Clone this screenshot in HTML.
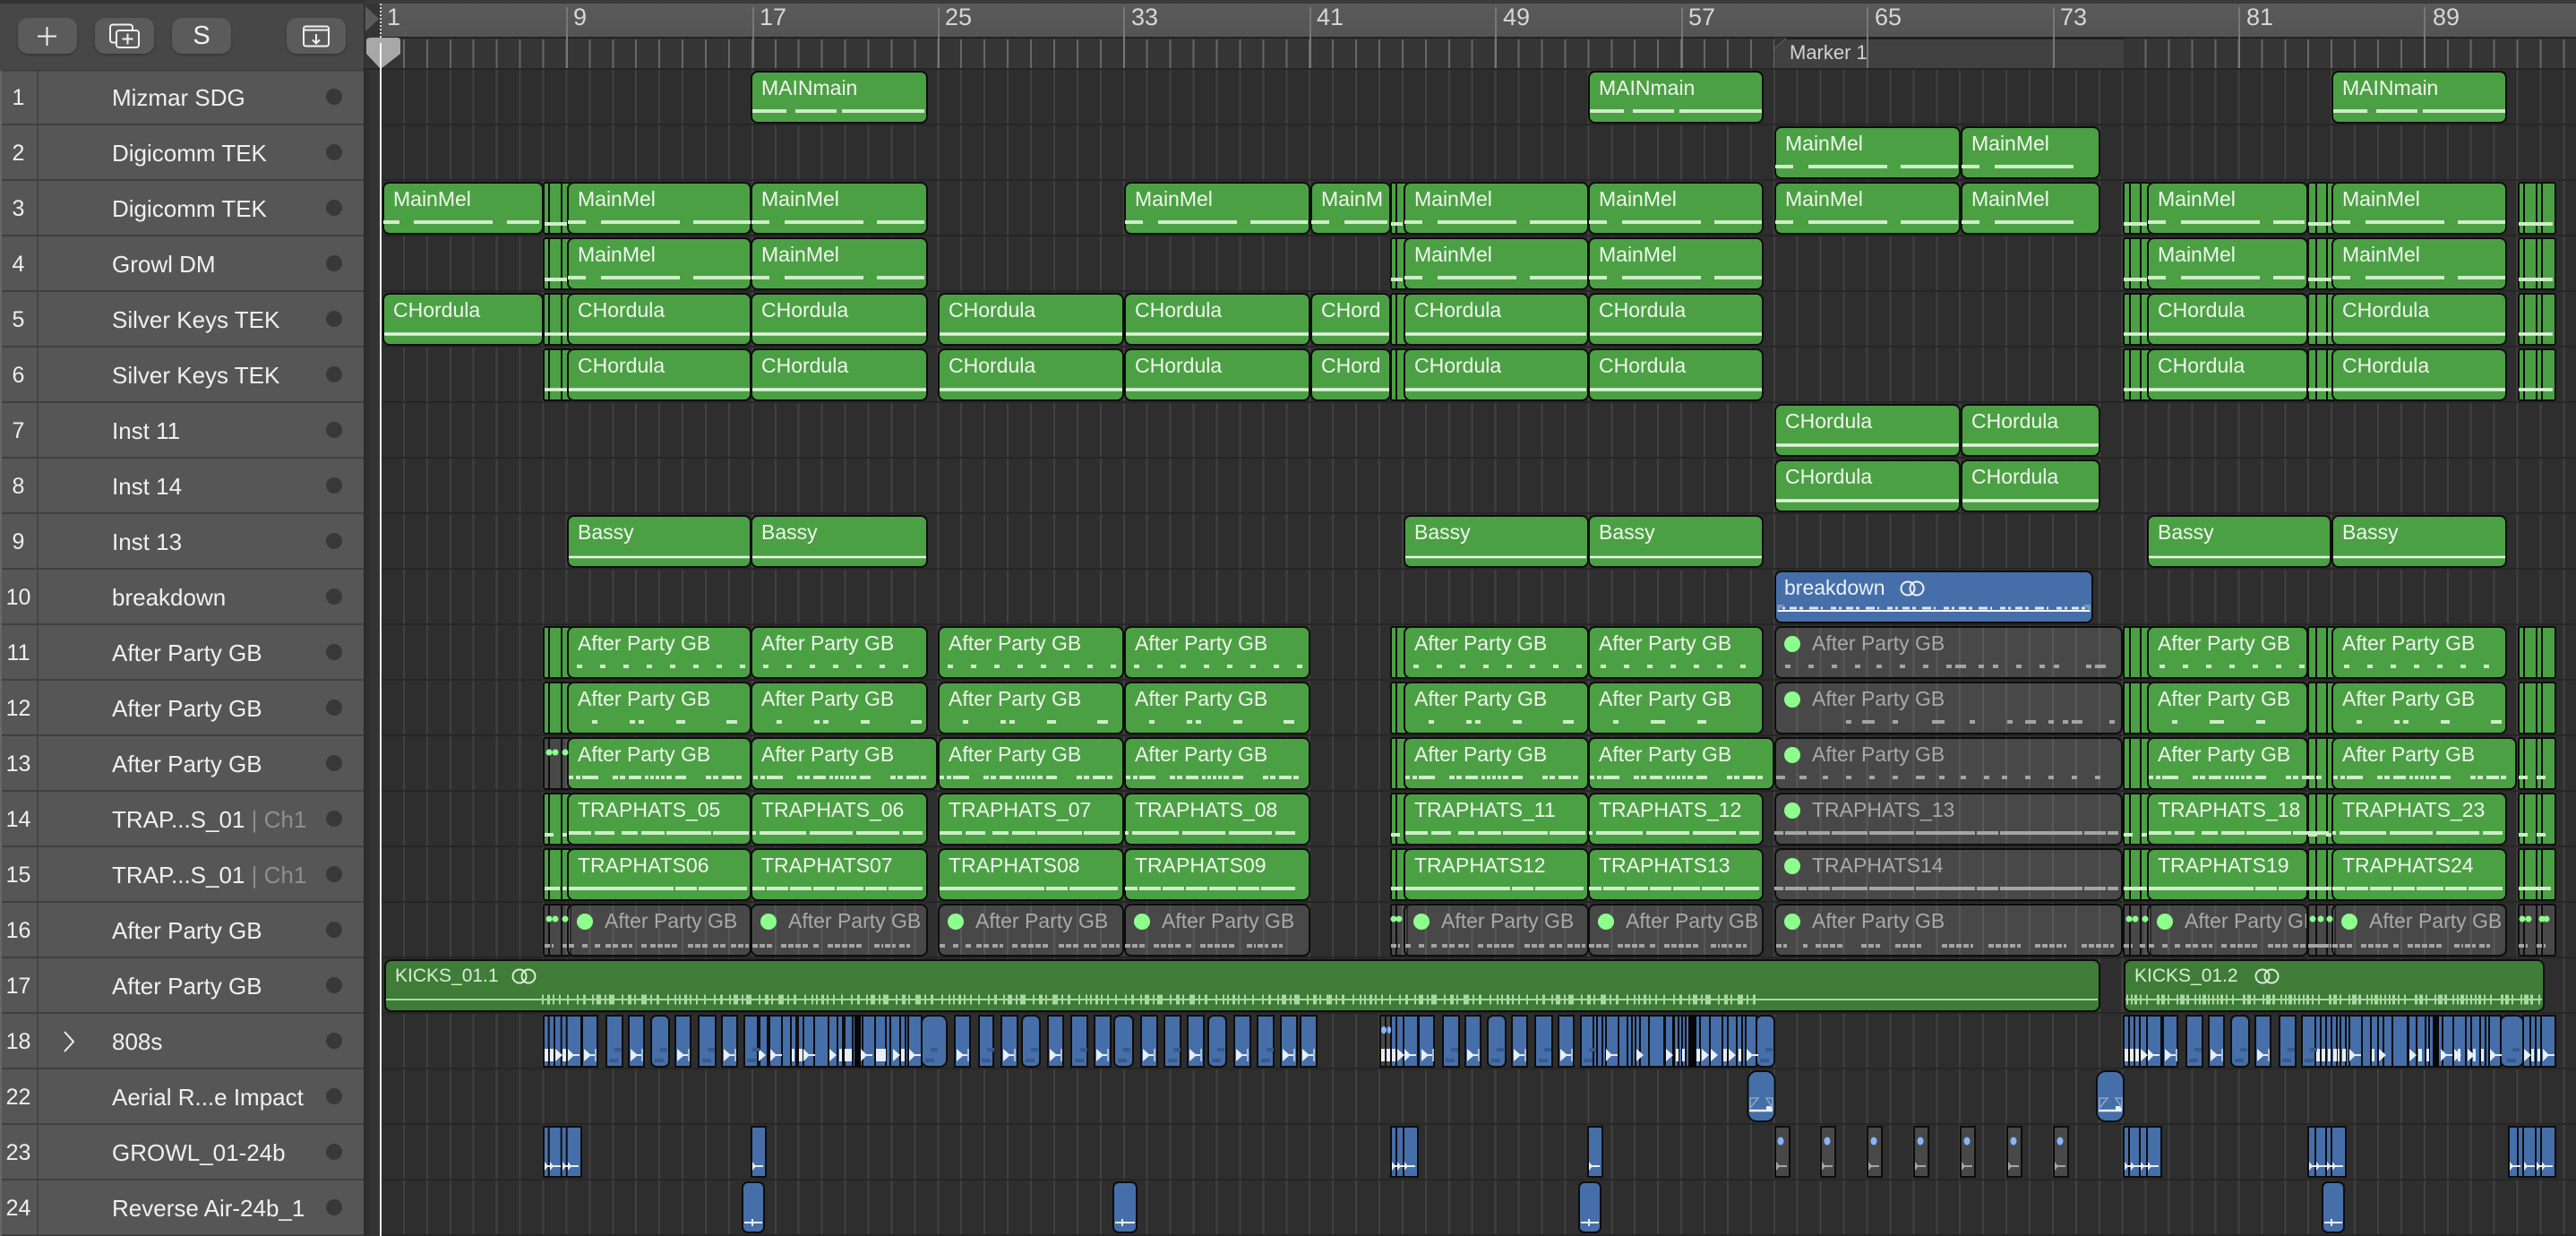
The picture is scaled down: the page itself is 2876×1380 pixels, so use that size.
<!DOCTYPE html>
<html><head><meta charset="utf-8"><title>Arrange</title>
<style>
html,body{margin:0;padding:0;background:#2e2e2e}
#p{position:relative;width:2876px;height:1380px;overflow:hidden;background:#2e2e2e;font-family:"Liberation Sans",sans-serif}
#g{position:absolute;left:424px;top:78px;right:0;bottom:0;background-color:#2e2e2e;background-image:repeating-linear-gradient(180deg,transparent 0 60px,#262626 60px 62px),repeating-linear-gradient(90deg,#414141 0 2px,transparent 2px 25.93px)}
#gl{position:absolute;left:406px;top:78px;width:18px;bottom:0;background:linear-gradient(90deg,#2b2b2b,#353535 60%,#333)}
.w{position:absolute;left:0;width:2876px;height:59px}
b{position:absolute;top:0;height:59px;box-sizing:border-box;border:2px solid #0d0d0d;border-radius:8px;background-color:#4ca044;color:#eef7ec;font:400 23px/26px "Liberation Sans",sans-serif;padding:4px 0 0 10px;white-space:nowrap;overflow:hidden}
.e{background-color:rgba(255,255,255,.125);color:#a9a9a9;padding-left:40px}
.e:before{content:"";position:absolute;left:9px;top:9px;width:18px;height:18px;border-radius:50%;background:#8cff8c}
.s{border-radius:3px;padding:0}
.x{background-color:rgba(255,255,255,.125)}
.A{left:606px;width:32px;background-image:linear-gradient(90deg,transparent 4px,#0d0d0d 4px 6px,transparent 6px 18px,#0d0d0d 18px 20px,transparent 20px)}
.B{left:1552px;width:20px;background-image:linear-gradient(90deg,transparent 4px,#0d0d0d 4px 6px,transparent 6px)}
.C{left:2370px;width:32px;background-image:linear-gradient(90deg,transparent 5px,#0d0d0d 5px 7px,transparent 7px 17px,#0d0d0d 17px 19px,transparent 19px)}
.D{left:2576px;width:32px;background-image:linear-gradient(90deg,transparent 7px,#0d0d0d 7px 9px,transparent 9px 19px,#0d0d0d 19px 21px,transparent 21px)}
.E{left:2811px;width:43px;background-image:linear-gradient(90deg,transparent 4px,#0d0d0d 4px 6px,transparent 6px 18px,#0d0d0d 18px 20px,transparent 20px 24px,#0d0d0d 24px 26px,transparent 26px)}
.k1{left:427px;width:180px}.k9{left:633px;width:206px}.k17{left:838px;width:198px}.k17l{left:838px;width:209px}
.k25{left:1047px;width:208px}.k33{left:1255px;width:208px}.k41{left:1463px;width:90px}.k45{left:1567px;width:207px}
.k53{left:1773px;width:196px}.k53l{left:1773px;width:208px}.k61{left:1981px;width:208px}.k69{left:2189px;width:156px}
.kg{left:1981px;width:389px}.k77{left:2397px;width:180px}.k77l{left:2397px;width:206px}.k85{left:2603px;width:196px}.k85l{left:2603px;width:207px}
.dk{background-color:#3e7c38;color:#d8eed3;font-size:21px}
.bl{background-color:#466fa9;color:#eaf0fa}
#o,#h2{position:absolute;left:0;top:0}
#sb{position:absolute;left:0;top:0;width:406px;height:1380px;background:#565656}
.t{position:absolute;left:0;width:406px;height:62px;box-sizing:border-box;border-bottom:2px solid #404040;background:#565656;color:#f0f0f0;font-size:26px;line-height:62px;white-space:nowrap}
.t u{position:absolute;left:0;width:41px;text-align:center;text-decoration:none;font-size:25px;border-right:2px solid #454545;height:60px;box-sizing:content-box;padding-left:0}
.t em{position:absolute;left:125px;font-style:normal}
.t em span{color:#8e8e8e}
.t i{position:absolute;left:364px;top:21px;width:18px;height:18px;border-radius:50%;background:#383838}
#ed{position:absolute;left:0;top:0;width:2px;height:1380px;background:#686868}
#hd{position:absolute;left:0;top:0;width:406px;height:78px;background:#474747;border-top:4px solid #333;box-sizing:border-box;box-shadow:0 1px 2px rgba(0,0,0,.4)}
.btn{position:absolute;top:20px;width:66px;height:40px;border-radius:11px;background:#5b5b5b;box-shadow:0 1px 2px rgba(0,0,0,.35);color:#f2f2f2;text-align:center;font-size:29px;line-height:40px}
#top{position:absolute;left:406px;top:0;right:0;height:78px;background:#353535}
#top0{position:absolute;left:0;top:0;width:100%;height:4px;background:#3a3a3a}
#rul{position:absolute;left:19px;top:4px;right:0;height:37px;background:linear-gradient(180deg,#5a5a5a,#545454);border-bottom:2px solid #222}
#ticks{position:absolute;left:18px;top:44px;right:0;height:34px;background-image:repeating-linear-gradient(90deg,#676767 0 2px,transparent 2px 25.93px)}
#mk{position:absolute;left:1575px;top:42px;width:390px;height:36px;background:#414141;border-top:2px solid #1f1f1f;box-sizing:border-box}
#mkt{position:absolute;left:1592px;top:46px;font-size:22px;line-height:26px;color:#d2d2d2;white-space:nowrap}
.rn{position:absolute;top:4px;font-size:27px;line-height:31px;color:#d6d6d6}
.rl{position:absolute;top:8px;width:2px;height:70px;background:#777}
#hline{position:absolute;left:406px;top:76px;right:0;height:2px;background:#262626}
#ph{position:absolute;left:424px;top:48px;width:2px;height:1332px;background:#f4f4f4}
</style></head><body>
<div id="p">
<div id="gl"></div><div id="g"></div>

<div class="w" style="top:79px"><b class="k17">MAINmain</b><b class="k53">MAINmain</b><b class="k85">MAINmain</b></div>
<div class="w" style="top:141px"><b class="k61">MainMel</b><b class="k69">MainMel</b></div>
<div class="w" style="top:203px"><b class="s A"></b><b class="s B"></b><b class="s C"></b><b class="s D"></b><b class="s E"></b><b class="k1">MainMel</b><b class="k9">MainMel</b><b class="k17">MainMel</b><b class="k33">MainMel</b><b class="k41">MainM</b><b class="k45">MainMel</b><b class="k53">MainMel</b><b class="k61">MainMel</b><b class="k69">MainMel</b><b class="k77">MainMel</b><b class="k85">MainMel</b></div>
<div class="w" style="top:265px"><b class="s A"></b><b class="s B"></b><b class="s C"></b><b class="s D"></b><b class="s E"></b><b class="k9">MainMel</b><b class="k17">MainMel</b><b class="k45">MainMel</b><b class="k53">MainMel</b><b class="k77">MainMel</b><b class="k85">MainMel</b></div>
<div class="w" style="top:327px"><b class="s A"></b><b class="s B"></b><b class="s C"></b><b class="s D"></b><b class="s E"></b><b class="k1">CHordula</b><b class="k9">CHordula</b><b class="k17">CHordula</b><b class="k25">CHordula</b><b class="k33">CHordula</b><b class="k41">CHord</b><b class="k45">CHordula</b><b class="k53">CHordula</b><b class="k77">CHordula</b><b class="k85">CHordula</b></div>
<div class="w" style="top:389px"><b class="s A"></b><b class="s B"></b><b class="s C"></b><b class="s D"></b><b class="s E"></b><b class="k9">CHordula</b><b class="k17">CHordula</b><b class="k25">CHordula</b><b class="k33">CHordula</b><b class="k41">CHord</b><b class="k45">CHordula</b><b class="k53">CHordula</b><b class="k77">CHordula</b><b class="k85">CHordula</b></div>
<div class="w" style="top:451px"><b class="k61">CHordula</b><b class="k69">CHordula</b></div>
<div class="w" style="top:513px"><b class="k61">CHordula</b><b class="k69">CHordula</b></div>
<div class="w" style="top:575px"><b class="k9">Bassy</b><b class="k17">Bassy</b><b class="k45">Bassy</b><b class="k53">Bassy</b><b class="k77l">Bassy</b><b class="k85">Bassy</b></div>
<div class="w" style="top:637px"><b class="bl" style="left:1981px;width:356px;padding-left:9px">breakdown</b></div>
<div class="w" style="top:699px"><b class="s A"></b><b class="s B"></b><b class="s C"></b><b class="s D"></b><b class="s E"></b><b class="k9">After Party GB</b><b class="k17">After Party GB</b><b class="k25">After Party GB</b><b class="k33">After Party GB</b><b class="k45">After Party GB</b><b class="k53">After Party GB</b><b class="kg e">After Party GB</b><b class="k77">After Party GB</b><b class="k85">After Party GB</b></div>
<div class="w" style="top:761px"><b class="s A"></b><b class="s B"></b><b class="s C"></b><b class="s D"></b><b class="s E"></b><b class="k9">After Party GB</b><b class="k17">After Party GB</b><b class="k25">After Party GB</b><b class="k33">After Party GB</b><b class="k45">After Party GB</b><b class="k53">After Party GB</b><b class="kg e">After Party GB</b><b class="k77">After Party GB</b><b class="k85">After Party GB</b></div>
<div class="w" style="top:823px"><b class="s A x"></b><b class="s B"></b><b class="s C"></b><b class="s D"></b><b class="s E"></b><b class="k9">After Party GB</b><b class="k17l">After Party GB</b><b class="k25">After Party GB</b><b class="k33">After Party GB</b><b class="k45">After Party GB</b><b class="k53l">After Party GB</b><b class="kg e">After Party GB</b><b class="k77">After Party GB</b><b class="k85l">After Party GB</b></div>
<div class="w" style="top:885px"><b class="s A"></b><b class="s B"></b><b class="s C"></b><b class="s D"></b><b class="s E"></b><b class="k9">TRAPHATS_05</b><b class="k17">TRAPHATS_06</b><b class="k25">TRAPHATS_07</b><b class="k33">TRAPHATS_08</b><b class="k45">TRAPHATS_11</b><b class="k53">TRAPHATS_12</b><b class="kg e">TRAPHATS_13</b><b class="k77">TRAPHATS_18</b><b class="k85">TRAPHATS_23</b></div>
<div class="w" style="top:947px"><b class="s A"></b><b class="s B"></b><b class="s C"></b><b class="s D"></b><b class="s E"></b><b class="k9">TRAPHATS06</b><b class="k17">TRAPHATS07</b><b class="k25">TRAPHATS08</b><b class="k33">TRAPHATS09</b><b class="k45">TRAPHATS12</b><b class="k53">TRAPHATS13</b><b class="kg e">TRAPHATS14</b><b class="k77">TRAPHATS19</b><b class="k85">TRAPHATS24</b></div>
<div class="w" style="top:1009px"><b class="s A x"></b><b class="s B x"></b><b class="s C x"></b><b class="s D x"></b><b class="s E x"></b><b class="k9 e">After Party GB</b><b class="k17 e">After Party GB</b><b class="k25 e">After Party GB</b><b class="k33 e">After Party GB</b><b class="k45 e">After Party GB</b><b class="k53 e">After Party GB</b><b class="kg e">After Party GB</b><b class="k77 e">After Party GB</b><b class="k85 e">After Party GB</b></div>
<div class="w" style="top:1071px"><b class="dk" style="left:429px;width:1916px">KICKS_01.1</b><b class="dk" style="left:2371px;width:470px">KICKS_01.2</b></div>

<svg id="o" width="2876" height="1380" viewBox="0 0 2876 1380" xmlns="http://www.w3.org/2000/svg">
<defs>
<path id="mm" d="M2 0h38m10 0h46m6 0h92"/>
<path id="m" d="M1 0h20m17 0h88m15 0h64"/>
<path id="ms" d="M1 0h20m17 0h88m15 0h53"/>
<path id="m2" d="M1 0h20m17 0h88"/>
<path id="m3" d="M1 0h20m17 0h48"/>
<path id="mc" d="M1 0h20m17 0h88m15 0h35"/>
<path id="p11" d="M11 0h188" stroke-dasharray="6 20"/>
<path id="p11s" d="M14 0h172" stroke-dasharray="6 20"/>
<path id="p12" d="M28 0h6m36 0h6m4 0h6m36 0h10m46 0h12"/>
<path id="p12c" d="M28 0h6m36 0h16m36 0h10"/>
<path id="p13" d="M2 0h5m3 0h5m2 0h18m16 0h6m2 0h6m4 0h14m4 0h4m2 0h4m2 0h4m2 0h4m2 0h6m4 0h12m22 0h6m2 0h6m4 0h14m2 0h6"/>
<path id="p14" d="M2 0h25m4 0h22m8 0h18m4 0h26m2 0h50m2 0h40"/>
<path id="p14b" d="M1 0h4m4 0h52m4 0h48m4 0h48m4 0h22"/>
<path id="p15" d="M2 0h117m2 0h24m2 0h54"/>
<path id="p15b" d="M1 0h14m2 0h24m2 0h24m2 0h24m2 0h30m2 0h24m2 0h38"/>
<path id="p16" d="M2 0h7m8 0h6m8 0h6m6 0h14m4 0h12m10 0h6m4 0h32m10 0h6m2 0h16m4 0h14m6 0h20"/>
<path id="p16b" d="M1 0h22m10 0h30m6 0h6m10 0h22m2 0h16m12 0h10m2 0h12m4 0h12"/>
<g id="lp" fill="none" stroke-width="2"><circle cx="8" cy="0" r="7.5"/><circle cx="18" cy="0" r="7.5"/></g>
<g id="w"><path d="M0-7L8 0 0 7z" fill="#e8effa"/><path d="M7 0h5" stroke="#e8effa" stroke-width="2"/><path d="M13-7v14" stroke="#a9bddb" stroke-width="2"/></g>
<g id="t"><path d="M0-7L8 0 0 7z" fill="#e8effa"/></g>
<g id="l"><path d="M0-7L7 0 0 7z" fill="#e8effa"/><path d="M6 0h7" stroke="#e8effa" stroke-width="2"/></g>
<g id="n" fill="#38598c"><rect x="3" y="4" width="10" height="4"/><rect x="9" y="-8" width="8" height="4"/></g>
<g id="v"><path d="M0-5L4 0 0 5z" fill="currentColor"/><path d="M3 0h9" stroke="currentColor" stroke-width="2"/></g>
</defs>

<!-- green dashes -->
<g fill="none" stroke="#cdeec8" stroke-width="4">
<g transform="translate(0 124)"><use href="#mm" x="838"/><use href="#mm" x="1773"/><use href="#mm" x="2603"/></g>
<g transform="translate(0 186)"><use href="#m" x="1981"/><use href="#m2" x="2189"/></g>
<g transform="translate(0 248)"><path d="M428 0h18m16 0h88m16 0h36M608 2h25M1553 2h13M2371 2h26M2577 2h26M2812 2h38"/><use href="#m" x="633"/><use href="#ms" x="838"/><use href="#m" x="1255"/><use href="#m3" x="1463"/><use href="#m" x="1567"/><use href="#ms" x="1773"/><use href="#m" x="1981"/><use href="#m2" x="2189"/><use href="#mc" x="2397"/><use href="#ms" x="2603"/></g>
<g transform="translate(0 310)"><path d="M608 2h25M1553 2h13M2371 2h26M2577 2h26M2812 2h38"/><use href="#m" x="633"/><use href="#ms" x="838"/><use href="#m" x="1567"/><use href="#ms" x="1773"/><use href="#mc" x="2397"/><use href="#ms" x="2603"/></g>
<path stroke-width="3.5" stroke="#dff5db" d="M429 373h176M608 373h25M635 373h202M840 373h194M1049 373h204M1257 373h204M1465 373h86M1569 373h202M1775 373h192M2371 373h26M2399 373h176M2577 373h26M2605 373h192M2812 373h38M608 435h25M635 435h202M840 435h194M1049 435h204M1257 435h204M1465 435h86M1569 435h202M1775 435h192M2371 435h26M2399 435h176M2577 435h26M2605 435h192M2812 435h38M1983 497h204M2191 497h152M1983 559h204M2191 559h152"/>
<path stroke-width="2.5" stroke="#eaf8e7" d="M635 622h202M840 622h194M1569 622h202M1775 622h192M2399 622h202M2605 622h192"/>
<g transform="translate(0 744)"><use href="#p11" x="633"/><use href="#p11s" x="838"/><use href="#p11" x="1047"/><use href="#p11" x="1255"/><use href="#p11" x="1567"/><use href="#p11s" x="1773"/><use href="#p11s" x="2397"/><use href="#p11s" x="2603"/></g>
<g transform="translate(0 806)"><use href="#p12" x="633"/><use href="#p12" x="839"/><use href="#p12" x="1047"/><use href="#p12" x="1255"/><use href="#p12" x="1567"/><use href="#p12c" x="1773"/><use href="#p12c" x="2397"/><use href="#p12" x="2603"/></g>
<g transform="translate(0 868)"><use href="#p13" x="633"/><use href="#p13" x="839"/><use href="#p13" x="1047"/><use href="#p13" x="1255"/><use href="#p13" x="1567"/><use href="#p13" x="1773"/><use href="#p13" x="2397"/><use href="#p13" x="2603"/><path d="M2812 0h10m10 0h10"/></g>
<g transform="translate(0 930)"><path d="M608 2h10m10 0h5M1553 2h10M2371 2h10m10 0h6M2577 2h10m10 0h6M2812 2h10m10 0h10"/><use href="#p14" x="633"/><use href="#p14b" x="839"/><use href="#p14" x="1047"/><use href="#p14b" x="1255"/><use href="#p14" x="1567"/><use href="#p14b" x="1773"/><use href="#p14" x="2397"/><use href="#p14b" x="2603"/></g>
<g transform="translate(0 992)"><path d="M608 0h17m3 0h5M1553 0h13M2371 0h26M2577 0h26M2812 0h36"/><use href="#p15" x="633"/><use href="#p15b" x="839"/><use href="#p15" x="1047"/><use href="#p15b" x="1255"/><use href="#p15" x="1567"/><use href="#p15b" x="1773"/><use href="#p15" x="2397"/><use href="#p15b" x="2603"/></g>
</g>
<!-- grey dashes -->
<g fill="none" stroke="#a4a4a4" stroke-width="4">
<path d="M1993 744h6m20 0h6m20 0h6m20 0h6m18 0h6m20 0h6m20 0h6m20 0h6m4 0h12m14 0h6m10 0h6m20 0h6m20 0h6m10 0h6m30 0h6m4 0h12"/>
<path d="M2061 806h6m12 0h14m20 0h6m38 0h14m28 0h6m36 0h6m14 0h12m14 0h6m10 0h6m4 0h12m30 0h6"/>
<path d="M1983 868h10m16 0h8m18 0h6m20 0h6m20 0h6m20 0h6m20 0h10m16 0h6m18 0h6m20 0h6m14 0h6m20 0h6m20 0h6m20 0h6m20 0h6"/>
<path d="M1981 930h10m2 0h24m2 0h24m2 0h40m2 0h50m2 0h66m2 0h24m2 0h92m2 0h24m2 0h12M1981 992h10m2 0h24m2 0h24m2 0h40m2 0h50m2 0h66m2 0h24m2 0h92m2 0h24m2 0h12"/>
<g transform="translate(0 1056)" stroke-dasharray="6 2"><path d="M608 0h10m10 0h5M1553 0h10M2371 0h10m8 0h8M2577 0h26M2812 0h10m10 0h10M1983 0h12m18 0h5m9 0h31m20 0h21m17 0h29m23 0h35m17 0h36m16 0h35m17 0h36"/><use href="#p16" x="633"/><use href="#p16b" x="839"/><use href="#p16" x="1047"/><use href="#p16b" x="1255"/><use href="#p16" x="1567"/><use href="#p16b" x="1773"/><use href="#p16" x="2397"/><use href="#p16b" x="2603"/></g>
</g>
<!-- slice dots -->
<path fill="none" stroke="#8cff8c" stroke-width="7" stroke-linecap="round" d="M613 840h0M620 840h0M631 840h0M613 1026h0M620 1026h0M631 1026h0M1556 1026h0M1562 1026h0M2377 1026h0M2384 1026h0M2395 1026h0M2582 1026h0M2591 1026h0M2601 1026h0M2816 1026h0M2823 1026h0M2838 1026h0M2843 1026h0"/>

<!-- breakdown -->
<g transform="translate(2122 657)" stroke="#eaf0fa"><use href="#lp"/></g>
<path fill="none" stroke="#f2f6fc" stroke-width="2" d="M1984 682H2334"/>
<path fill="none" stroke="#dbe6f6" stroke-width="3" stroke-dasharray="3 5 8 3 4 7 10 3 2 9 6 3" d="M1990 679H2332"/>
<path fill="#7e96bd" d="M1984 675h8l-8 8zM2334 675h-8l8 8z"/>

<!-- kicks -->
<g transform="translate(572 1090)" stroke="#d8eed3"><use href="#lp"/></g>
<g transform="translate(2518 1090)" stroke="#d8eed3"><use href="#lp"/></g>
<path fill="none" stroke="#a9d6a3" stroke-width="2" d="M431 1116H2342M2373 1116H2838"/>
<path fill="none" stroke="#a9d6a3" stroke-width="11" stroke-dasharray="2 4 3 3 2 5 2 7 2 9 2 5 3 7 2 3 5 4 2 3 6 8 2 5 4 3 2 6 6 4 2 5 3 9 2 6 2 3" d="M605 1116H1962"/>
<path fill="none" stroke="#a9d6a3" stroke-width="11" stroke-dasharray="2 3 2 2 3 3 2 5 2 10 3 2 4 3 2 8 2 2 5 2 3 6 2 3 2 2 4 2 2 3" d="M2374 1116H2836"/>

<!-- blue rows -->
<g fill="#466fa9" stroke="#0d0d0d" stroke-width="2" stroke-linejoin="round">
<path d="M607 1134H649V1191H607zM650 1134H667V1191H650zM677 1134H695V1191H677zM702 1134H719V1191H702zM754 1134H771V1191H754zM780 1134H799V1191H780zM806 1134H823V1191H806zM831 1134H1029V1191H831zM1066 1134H1083V1191H1066zM1093 1134H1109V1191H1093zM1118 1134H1136V1191H1118zM1170 1134H1187V1191H1170zM1196 1134H1214V1191H1196zM1222 1134H1240V1191H1222zM1274 1134H1292V1191H1274zM1300 1134H1318V1191H1300zM1326 1134H1344V1191H1326zM1378 1134H1396V1191H1378zM1404 1134H1422V1191H1404zM1430 1134H1448V1191H1430zM1452 1134H1470V1191H1452zM1541 1134H1583V1191H1541zM1584 1134H1601V1191H1584zM1611 1134H1629V1191H1611zM1636 1134H1653V1191H1636zM1688 1134H1705V1191H1688zM1714 1134H1733V1191H1714zM1740 1134H1757V1191H1740zM1765 1134H1858V1191H1765zM1859 1134H1961V1191H1859zM2371 1134H2413V1191H2371zM2415 1134H2431V1191H2415zM2441 1134H2459V1191H2441zM2466 1134H2483V1191H2466zM2518 1134H2535V1191H2518zM2545 1134H2563V1191H2545zM2570 1134H2688V1191H2570zM2689 1134H2792V1191H2689zM2817 1134H2853V1191H2817z"/>
<rect x="727" y="1134" width="20" height="57" rx="6"/><rect x="1029" y="1134" width="28" height="57" rx="8"/><rect x="1141" y="1134" width="20" height="57" rx="6"/><rect x="1244" y="1134" width="21" height="57" rx="6"/><rect x="1349" y="1134" width="20" height="57" rx="6"/><rect x="1661" y="1134" width="20" height="57" rx="6"/><rect x="1961" y="1134" width="20" height="57" rx="6"/><rect x="2491" y="1134" width="20" height="57" rx="6"/><rect x="2792" y="1134" width="25" height="57" rx="7"/>
<rect x="1951.5" y="1196" width="30" height="56" rx="10"/><rect x="2341" y="1196" width="30" height="56" rx="10"/>
<path d="M607 1258H649V1314H607zM839 1258H855V1314H839zM1553 1258H1583V1314H1553zM1773 1258H1789V1314H1773zM2371 1258H2413V1314H2371zM2577 1258H2619V1314H2577zM2801 1258H2853V1314H2801z"/>
<rect x="829" y="1320" width="24" height="56" rx="6"/><rect x="1243" y="1320" width="26" height="56" rx="6"/><rect x="1763" y="1320" width="24" height="56" rx="6"/><rect x="2593" y="1320" width="24" height="56" rx="6"/>
</g>
<g fill="#484848" stroke="#0d0d0d" stroke-width="2"><path d="M1982 1258h16v56h-16zM2033 1258h16v56h-16zM2085 1258h16v56h-16zM2137 1258h16v56h-16zM2189 1258h16v56h-16zM2241 1258h16v56h-16zM2293 1258h16v56h-16zM1541 1134h6v57h-6zM1547 1134h6v57h-6z"/></g>
<g fill="#86b6ff"><ellipse cx="1988" cy="1274" rx="3.5" ry="4.5"/><ellipse cx="2040" cy="1274" rx="3.5" ry="4.5"/><ellipse cx="2092" cy="1274" rx="3.5" ry="4.5"/><ellipse cx="2144" cy="1274" rx="3.5" ry="4.5"/><ellipse cx="2196" cy="1274" rx="3.5" ry="4.5"/><ellipse cx="2248" cy="1274" rx="3.5" ry="4.5"/><ellipse cx="2300" cy="1274" rx="3.5" ry="4.5"/><ellipse cx="1545" cy="1150" rx="3" ry="4"/><ellipse cx="1551" cy="1150" rx="2" ry="4"/></g>
<!-- separators -->
<path fill="none" stroke="#0d0d0d" stroke-width="2" d="M612.7 1134V1191M619 1134V1191M626.7 1134V1191M632.7 1134V1191M846 1134V1191M848 1134V1191M857 1134V1191M859 1134V1191M873 1134V1191M883 1134V1191M889 1134V1191M891 1134V1191M897 1134V1191M909 1134V1191M925 1134V1191M935 1134V1191M941 1134V1191M943 1134V1191M952 1134V1191M963 1134V1191M977 1134V1191M989 1134V1191M994 1134V1191M1005 1134V1191M1011 1134V1191M1014 1134V1191M1559 1134V1191M1567 1134V1191M1779 1134V1191M1783 1134V1191M1789 1134V1191M1793 1134V1191M1807 1134V1191M1817 1134V1191M1822 1134V1191M1826 1134V1191M1831 1134V1191M1841 1134V1191M1874 1134V1191M1878 1134V1191M1882 1134V1191M1898 1134V1191M1909 1134V1191M1923 1134V1191M1929 1134V1191M1939 1134V1191M1945 1134V1191M1949 1134V1191M2377 1134V1191M2383 1134V1191M2389 1134V1191M2397 1134V1191M2585 1134V1191M2591 1134V1191M2597 1134V1191M2603 1134V1191M2609 1134V1191M2613 1134V1191M2619 1134V1191M2623 1134V1191M2637 1134V1191M2647 1134V1191M2655 1134V1191M2661 1134V1191M2671 1134V1191M2698 1134V1191M2708 1134V1191M2712 1134V1191M2727 1134V1191M2739 1134V1191M2753 1134V1191M2759 1134V1191M2769 1134V1191M2775 1134V1191M2779 1134V1191M2825 1134V1191M2831 1134V1191M2837 1134V1191M612.7 1258V1314M626.7 1258V1314M632.7 1258V1314M1559 1258V1314M1567 1258V1314M2377 1258V1314M2389 1258V1314M2397 1258V1314M2585 1258V1314M2597 1258V1314M2603 1258V1314M2811 1258V1314M2817 1258V1314M2831 1258V1314M2837 1258V1314"/>
<path fill="#060606" d="M954 1134h7v57h-7zM1867 1134h3v57h-3zM1885 1134h9v57h-9zM2716 1134h7v57h-7z"/>
<!-- waveform bars row 18 -->
<path fill="none" stroke="#e8effa" stroke-width="14" d="M608 1178h4M614 1178h4M628 1178h4M884 1178h3M892 1178h4M937 1178h3M943 1178h8M978 1178h11M1006 1178h4M1548 1178h4M1542 1178h4M1554 1178h4M1871 1178h3M1878 1178h3M1894 1178h4M1924 1178h4M1941 1178h3M2372 1178h4M2378 1178h4M2384 1178h4M2586 1178h4M2592 1178h4M2599 1178h3M2605 1178h4M2610 1178h2M2615 1178h4M2648 1178h3M2700 1178h4M2709 1178h3M2744 1178h3M2761 1178h3M2770 1178h3M2826 1178h3M2833 1178h3"/>
<g transform="translate(0 1178)">
<use href="#t" x="620"/><use href="#l" x="634"/><use href="#w" x="652"/><use href="#w" x="704"/><use href="#w" x="756"/><use href="#w" x="808"/>
<use href="#t" x="847"/><use href="#l" x="860"/><use href="#l" x="897"/><use href="#t" x="926"/><use href="#l" x="961"/><use href="#t" x="997"/><use href="#l" x="1015"/>
<use href="#w" x="1068"/><use href="#w" x="1120"/><use href="#w" x="1172"/><use href="#w" x="1224"/><use href="#w" x="1276"/><use href="#w" x="1328"/><use href="#w" x="1380"/><use href="#w" x="1432"/><use href="#w" x="1454"/>
<use href="#t" x="1560"/><use href="#l" x="1568"/><use href="#w" x="1587"/><use href="#w" x="1638"/><use href="#w" x="1690"/><use href="#w" x="1742"/><use href="#l" x="1793"/><use href="#t" x="1827"/>
<use href="#t" x="1860"/><use href="#t" x="1900"/><use href="#t" x="1910"/><use href="#t" x="1930"/><use href="#l" x="1950"/>
<use href="#t" x="2390"/><use href="#l" x="2398"/><use href="#w" x="2417"/><use href="#w" x="2468"/><use href="#w" x="2520"/>
<use href="#l" x="2623"/><use href="#t" x="2656"/><use href="#t" x="2690"/><use href="#l" x="2725"/><use href="#t" x="2740"/><use href="#t" x="2755"/><use href="#l" x="2780"/><use href="#t" x="2818"/><use href="#l" x="2839"/>
<use href="#n" x="677"/><use href="#n" x="728"/><use href="#n" x="781"/><use href="#n" x="831"/><use href="#n" x="1030"/><use href="#n" x="1093"/><use href="#n" x="1142"/><use href="#n" x="1197"/><use href="#n" x="1245"/><use href="#n" x="1301"/><use href="#n" x="1350"/><use href="#n" x="1405"/>
<use href="#n" x="1611"/><use href="#n" x="1662"/><use href="#n" x="1715"/><use href="#n" x="1765"/><use href="#n" x="1962"/><use href="#n" x="2441"/><use href="#n" x="2492"/><use href="#n" x="2545"/><use href="#n" x="2570"/><use href="#n" x="2796"/>
</g>
<!-- row 22 -->
<path fill="none" stroke="#e8effa" stroke-width="2.5" d="M1953 1240h26M2343 1240h26"/><path fill="#e8effa" d="M1972 1235h7v5h-7zM2362 1235h7v5h-7z"/>
<path fill="none" stroke="#8fa6c9" stroke-width="1.5" d="M1954 1226h9l-9 11zM1979 1226h-7l7 11zM2344 1226h9l-9 11zM2369 1226h-7l7 11z"/>
<!-- row 23 -->
<g transform="translate(0 1302)" color="#e8effa"><use href="#v" x="608"/><use href="#v" x="614"/><use href="#v" x="628"/><use href="#v" x="634"/><use href="#v" x="840"/><use href="#v" x="1554"/><use href="#v" x="1560"/><use href="#v" x="1568"/><use href="#v" x="1774"/><use href="#v" x="2372"/><use href="#v" x="2379"/><use href="#v" x="2390"/><use href="#v" x="2398"/><use href="#v" x="2578"/><use href="#v" x="2586"/><use href="#v" x="2598"/><use href="#v" x="2604"/><use href="#v" x="2802"/><use href="#v" x="2818"/><use href="#v" x="2832"/><use href="#v" x="2838"/></g>
<g transform="translate(0 1302)" color="#a6a6a6"><use href="#v" x="1983"/><use href="#v" x="2034"/><use href="#v" x="2086"/><use href="#v" x="2138"/><use href="#v" x="2190"/><use href="#v" x="2242"/><use href="#v" x="2294"/></g>
<!-- row 24 -->
<path fill="none" stroke="#e8effa" stroke-width="2" d="M831 1365h20M840 1361v8M1245 1365h22M1253 1361v8M1765 1365h20M1774 1361v8M2595 1365h20M2603 1361v8"/>
</svg>

<div id="top">
<div id="top0"></div>
<div id="rul"></div>
<svg style="position:absolute;left:0;top:0" width="20" height="44"><path d="M2 7L17 21 2 35z" fill="#5c5c5c"/></svg>
<div id="ticks"></div>
<div id="mk"></div>
<svg style="position:absolute;left:1575px;top:42px" width="30" height="14"><path d="M0 0h14L0 12z" fill="#333"/><path d="M0 12L13 1" stroke="#555" stroke-width="1.5"/></svg>
<div id="mkt">Marker 1</div>
<div class="rl" style="left:226px"></div><div class="rl" style="left:433.5px"></div><div class="rl" style="left:641px"></div><div class="rl" style="left:848px"></div><div class="rl" style="left:1056px"></div><div class="rl" style="left:1263px"></div><div class="rl" style="left:1471px"></div><div class="rl" style="left:1678px"></div><div class="rl" style="left:1886px"></div><div class="rl" style="left:2093px"></div><div class="rl" style="left:2300px"></div>
<span class="rn" style="left:26px">1</span><span class="rn" style="left:234px">9</span><span class="rn" style="left:442px">17</span><span class="rn" style="left:649px">25</span><span class="rn" style="left:857px">33</span><span class="rn" style="left:1064px">41</span><span class="rn" style="left:1272px">49</span><span class="rn" style="left:1479px">57</span><span class="rn" style="left:1687px">65</span><span class="rn" style="left:1894px">73</span><span class="rn" style="left:2102px">81</span><span class="rn" style="left:2310px">89</span>
</div>
<div id="hline"></div>

<div id="sb">
<div class="t" style="top:77.5px"><u>1</u><em>Mizmar SDG</em><i></i></div>
<div class="t" style="top:139.5px"><u>2</u><em>Digicomm TEK</em><i></i></div>
<div class="t" style="top:201.5px"><u>3</u><em>Digicomm TEK</em><i></i></div>
<div class="t" style="top:263.5px"><u>4</u><em>Growl DM</em><i></i></div>
<div class="t" style="top:325.5px"><u>5</u><em>Silver Keys TEK</em><i></i></div>
<div class="t" style="top:387.5px"><u>6</u><em>Silver Keys TEK</em><i></i></div>
<div class="t" style="top:449.5px"><u>7</u><em>Inst 11</em><i></i></div>
<div class="t" style="top:511.5px"><u>8</u><em>Inst 14</em><i></i></div>
<div class="t" style="top:573.5px"><u>9</u><em>Inst 13</em><i></i></div>
<div class="t" style="top:635.5px"><u>10</u><em>breakdown</em><i></i></div>
<div class="t" style="top:697.5px"><u>11</u><em>After Party GB</em><i></i></div>
<div class="t" style="top:759.5px"><u>12</u><em>After Party GB</em><i></i></div>
<div class="t" style="top:821.5px"><u>13</u><em>After Party GB</em><i></i></div>
<div class="t" style="top:883.5px"><u>14</u><em>TRAP...S_01 <span>| Ch1</span></em><i></i></div>
<div class="t" style="top:945.5px"><u>15</u><em>TRAP...S_01 <span>| Ch1</span></em><i></i></div>
<div class="t" style="top:1007.5px"><u>16</u><em>After Party GB</em><i></i></div>
<div class="t" style="top:1069.5px"><u>17</u><em>After Party GB</em><i></i></div>
<div class="t" style="top:1131.5px"><u>18</u><svg style="position:absolute;left:70px;top:18px" width="14" height="26"><path d="M2 2L12 13 2 24" fill="none" stroke="#eee" stroke-width="2"/></svg><em>808s</em><i></i></div>
<div class="t" style="top:1193.5px"><u>22</u><em>Aerial R...e Impact</em><i></i></div>
<div class="t" style="top:1255.5px"><u>23</u><em>GROWL_01-24b</em><i></i></div>
<div class="t" style="top:1317.5px"><u>24</u><em>Reverse Air-24b_1</em><i></i></div>
<div id="ed"></div>
<div id="hd"></div>
<div class="btn" style="left:20px"></div><div class="btn" style="left:106px"></div><div class="btn" style="left:192px">S</div><div class="btn" style="left:320px"></div>
<svg style="position:absolute;left:0;top:0" width="406" height="78" fill="none" stroke="#f0f0f0" stroke-width="2">
<path d="M42 40.5h21M52.5 30v21"/>
<path d="M148 33v-2.500a3 3 0 0 0-3-3h-19a3 3 0 0 0-3 3v14a3 3 0 0 0 3 3h4"/>
<rect x="130" y="34" width="25" height="19" rx="3"/>
<path d="M136.500 43.500h12M142.500 37.500v12"/>
<rect x="339" y="29.500" width="28" height="22" rx="2.500"/>
<path d="M339 33.500h28M353 38v10M349 44.500l4 4 4-4"/>
</svg>
</div>

<svg style="position:absolute;left:404px;top:0" width="44" height="80"><path d="M21 4v40" stroke="#d8d8d8" stroke-width="2" stroke-dasharray="2 2"/><path d="M10 42h30a3 3 0 0 1 3 3v15L21 77 5 60V45a5 3 0 0 1 5-3z" fill="#a8a8a8"/></svg>
<div id="ph"></div>
</div>
</body></html>
